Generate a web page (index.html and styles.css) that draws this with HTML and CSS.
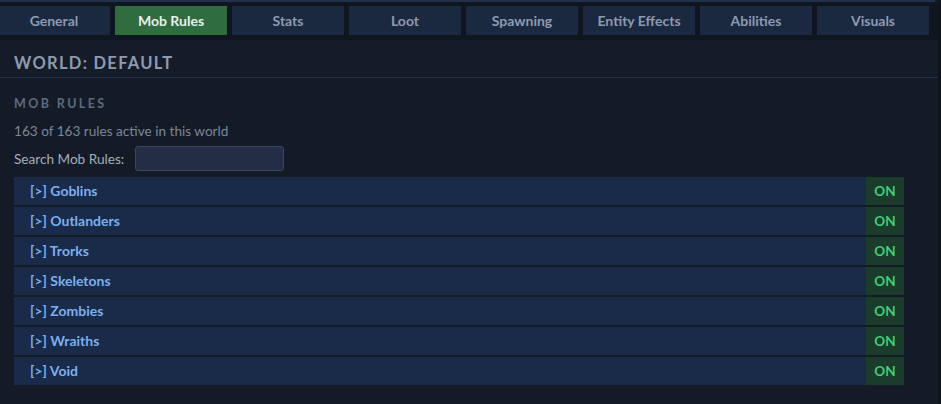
FILE: index.html
```html
<!DOCTYPE html>
<html>
<head>
<meta charset="utf-8">
<link rel="stylesheet" href="styles.css">
</head>
<body>
<div class="app">
  <div class="topline"></div>
  <nav class="tabbar">
    <div class="tab">General</div>
    <div class="tab active">Mob Rules</div>
    <div class="tab">Stats</div>
    <div class="tab">Loot</div>
    <div class="tab">Spawning</div>
    <div class="tab">Entity Effects</div>
    <div class="tab">Abilities</div>
    <div class="tab">Visuals</div>
  </nav>
  <header class="world">WORLD: DEFAULT</header>
  <main class="content">
    <h2 class="section-title">MOB RULES</h2>
    <p class="count">163 of 163 rules active in this world</p>
    <div class="search">
      <label class="search-label">Search Mob Rules:</label>
      <input class="search-input" type="text">
    </div>
    <div class="rules">
      <div class="rule"><span class="rule-name">[&gt;] Goblins</span><span class="rule-state">ON</span></div>
      <div class="rule"><span class="rule-name">[&gt;] Outlanders</span><span class="rule-state">ON</span></div>
      <div class="rule"><span class="rule-name">[&gt;] Trorks</span><span class="rule-state">ON</span></div>
      <div class="rule"><span class="rule-name">[&gt;] Skeletons</span><span class="rule-state">ON</span></div>
      <div class="rule"><span class="rule-name">[&gt;] Zombies</span><span class="rule-state">ON</span></div>
      <div class="rule"><span class="rule-name">[&gt;] Wraiths</span><span class="rule-state">ON</span></div>
      <div class="rule"><span class="rule-name">[&gt;] Void</span><span class="rule-state">ON</span></div>
    </div>
  </main>
</div>
</body>
</html>
```

FILE: styles.css
```css
html, body {
  margin: 0;
  padding: 0;
  background: #0e131c;
  font-family: Lato, "Noto Sans", sans-serif;
}

.app {
  width: 938px;
  height: 404px;
  background: #141b27;
  overflow: hidden;
}

.topline {
  height: 2px;
  background: #21314d;
  margin-right: 3px;
}

.tabbar {
  display: flex;
  gap: 5px;
  background: #10161f;
  padding: 4px 0 5px 0;
  margin-left: -2px;
}

.tab {
  width: 112px;
  height: 29px;
  flex: none;
  display: flex;
  align-items: center;
  justify-content: center;
  background: #1b2940;
  color: #8e9ab0;
  font-size: 14px;
  font-weight: 700;
}

.tab.active {
  background: #2f6c40;
  color: #e8efe9;
}

.world {
  height: 38px;
  box-sizing: border-box;
  padding: 13px 14px 0;
  border-bottom: 1px solid #1f2f4a;
  color: #8d9bb0;
  font-size: 16.5px;
  font-weight: 700;
  letter-spacing: 1.3px;
  background: #151c28;
}

.content {
  padding: 0 14px;
}

.section-title {
  margin: 19px 0 0;
  font-size: 12.5px;
  font-weight: 700;
  letter-spacing: 2.4px;
  color: #5d6a7d;
  line-height: 14px;
}

.count {
  margin: 12px 0 0;
  font-size: 13.6px;
  color: #7b8698;
  line-height: 16px;
}

.search {
  display: flex;
  align-items: center;
  gap: 11px;
  margin-top: 7px;
}

.search-label {
  font-size: 13.6px;
  color: #a3adbb;
}

.search-input {
  width: 149px;
  height: 25px;
  box-sizing: border-box;
  margin: 0;
  background: #232e46;
  border: 1px solid #3b465d;
  border-radius: 3px;
  outline: none;
}

.rules {
  width: 890px;
  margin-top: 6px;
  display: flex;
  flex-direction: column;
  gap: 2px;
}

.rule {
  height: 28px;
  display: flex;
  align-items: center;
  background: #1a2a49;
}

.rule-name {
  flex: 1;
  padding-left: 16px;
  padding-bottom: 2px;
  color: #7bb0ef;
  font-size: 14px;
  font-weight: 700;
}

.rule-state {
  width: 38px;
  height: 100%;
  box-sizing: border-box;
  padding-bottom: 1px;
  display: flex;
  align-items: center;
  justify-content: center;
  background: #1b3b2b;
  color: #3ecf78;
  font-size: 13.5px;
  font-weight: 700;
}
```
